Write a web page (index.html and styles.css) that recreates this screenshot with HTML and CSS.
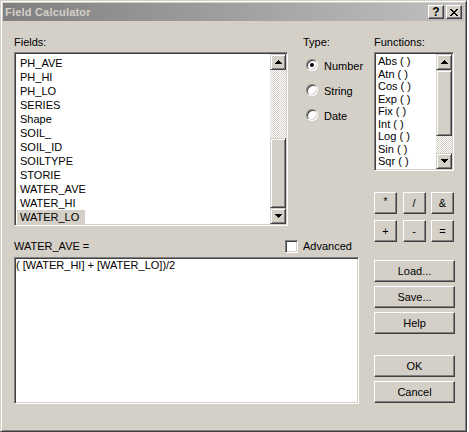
FILE: index.html
```html
<!DOCTYPE html>
<html lang="en">
<head>
    <meta charset="UTF-8">
    <title>Field Calculator</title>
    <link rel="stylesheet" href="styles.css">
</head>
<body>
    <div class="window">
        <div class="titlebar">
            <span class="title">Field Calculator</span>
            <div class="caption-buttons">
                <span class="cap-btn">?</span>
                <span class="cap-btn">
                    <svg width="8" height="7" viewBox="0 0 8 7" shape-rendering="crispEdges">
                        <path d="M0 0h2v1h-2z M6 0h2v1h-2z M1 1h2v1h-2z M5 1h2v1h-2z M2 2h4v1h-4z M3 3h2v1h-2z M2 4h4v1h-4z M1 5h2v1h-2z M5 5h2v1h-2z M0 6h2v1h-2z M6 6h2v1h-2z" fill="#000"/>
                    </svg>
                </span>
            </div>
        </div>
        <div class="client">
            <div class="left">
                <div class="top">
                    <div class="fields">
                        <div class="label">Fields:</div>
                        <div class="listbox fields-list">
                            <ul class="items">
                                <li>PH_AVE</li>
                                <li>PH_HI</li>
                                <li>PH_LO</li>
                                <li>SERIES</li>
                                <li>Shape</li>
                                <li>SOIL_</li>
                                <li>SOIL_ID</li>
                                <li>SOILTYPE</li>
                                <li>STORIE</li>
                                <li>WATER_AVE</li>
                                <li>WATER_HI</li>
                                <li class="selected">WATER_LO</li>
                            </ul>
                            <div class="scrollbar">
                                <div class="sb-btn">
                                    <svg width="7" height="4" viewBox="0 0 7 4" shape-rendering="crispEdges"><path d="M3 0h1v1h-1z M2 1h3v1h-3z M1 2h5v1h-5z M0 3h7v1h-7z" fill="#000"/></svg>
                                </div>
                                <div class="sb-track" style="height: 68px"></div>
                                <div class="sb-thumb" style="height: 70px"></div>
                                <div class="sb-btn">
                                    <svg width="7" height="4" viewBox="0 0 7 4" shape-rendering="crispEdges"><path d="M0 0h7v1h-7z M1 1h5v1h-5z M2 2h3v1h-3z M3 3h1v1h-1z" fill="#000"/></svg>
                                </div>
                            </div>
                        </div>
                    </div>
                    <div class="type">
                        <div class="label">Type:</div>
                        <div class="radio-row"><span class="radio checked"></span>Number</div>
                        <div class="radio-row"><span class="radio"></span>String</div>
                        <div class="radio-row"><span class="radio"></span>Date</div>
                    </div>
                </div>
                <div class="expr-row">
                    <span class="expr-label">WATER_AVE =</span>
                    <span class="checkbox"></span>
                    <span class="check-label">Advanced</span>
                </div>
                <div class="expression">( [WATER_HI] + [WATER_LO])/2</div>
            </div>
            <div class="right">
                <div class="label">Functions:</div>
                <div class="listbox func-list">
                    <ul class="items">
                        <li>Abs ( )</li>
                        <li>Atn ( )</li>
                        <li>Cos ( )</li>
                        <li>Exp ( )</li>
                        <li>Fix ( )</li>
                        <li>Int ( )</li>
                        <li>Log ( )</li>
                        <li>Sin ( )</li>
                        <li>Sqr ( )</li>
                    </ul>
                    <div class="scrollbar">
                        <div class="sb-btn">
                            <svg width="7" height="4" viewBox="0 0 7 4" shape-rendering="crispEdges"><path d="M3 0h1v1h-1z M2 1h3v1h-3z M1 2h5v1h-5z M0 3h7v1h-7z" fill="#000"/></svg>
                        </div>
                        <div class="sb-thumb" style="height: 66px"></div>
                        <div class="sb-track" style="height: 17px"></div>
                        <div class="sb-btn">
                            <svg width="7" height="4" viewBox="0 0 7 4" shape-rendering="crispEdges"><path d="M0 0h7v1h-7z M1 1h5v1h-5z M2 2h3v1h-3z M3 3h1v1h-1z" fill="#000"/></svg>
                        </div>
                    </div>
                </div>
                <div class="ops">
                    <button class="btn star">*</button>
                    <button class="btn">/</button>
                    <button class="btn">&amp;</button>
                    <button class="btn">+</button>
                    <button class="btn">-</button>
                    <button class="btn">=</button>
                </div>
                <div class="actions">
                    <button class="btn">Load...</button>
                    <button class="btn">Save...</button>
                    <button class="btn">Help</button>
                    <button class="btn ok">OK</button>
                    <button class="btn">Cancel</button>
                </div>
            </div>
        </div>
    </div>
</body>
</html>
```

FILE: styles.css
```css
body {
    margin: 0;
    background-color: #ffffff;
    color: #000000;
    font-family: "Liberation Sans", Arial, sans-serif;
    font-size: 11px;
}
.window {
    width: 467px;
    height: 432px;
    box-sizing: border-box;
    padding: 2px;
    display: flex;
    flex-direction: column;
    background-color: #d4d0c8;
    border: 1px solid;
    border-color: #d4d0c8 #404040 #404040 #d4d0c8;
    box-shadow: inset 1px 1px #ffffff, inset -1px -1px #808080;
}
.titlebar {
    height: 18px;
    flex-shrink: 0;
    display: flex;
    align-items: center;
    justify-content: space-between;
    padding: 0 2px;
    background: linear-gradient(to right, #808080, #c0c0c0);
}
.title {
    color: #d4d0c8;
    font-weight: bold;
    letter-spacing: 0.2px;
}
.caption-buttons {
    display: flex;
    gap: 2px;
}
.cap-btn {
    width: 16px;
    height: 14px;
    box-sizing: border-box;
    display: flex;
    align-items: center;
    justify-content: center;
    background-color: #d4d0c8;
    border: 1px solid;
    border-color: #ffffff #404040 #404040 #ffffff;
    box-shadow: inset -1px -1px #808080;
    font-weight: bold;
    font-size: 12px;
    line-height: 12px;
}
.client {
    flex: 1;
    display: flex;
    gap: 15px;
    padding: 14px 0 0 11px;
}
.label {
    height: 14px;
    line-height: 14px;
}
.left {
    width: 345px;
    flex-shrink: 0;
}
.top {
    display: flex;
}
.fields {
    width: 274px;
    flex-shrink: 0;
}
.listbox {
    margin-top: 3px;
    box-sizing: border-box;
    display: flex;
    padding: 1px;
    background-color: #ffffff;
    border: 1px solid;
    border-color: #808080 #ffffff #ffffff #808080;
    box-shadow: inset 1px 1px #404040, inset -1px -1px #d4d0c8;
}
.fields-list {
    height: 174px;
}
.items {
    flex: 1;
    margin: 0;
    padding: 2px 0 0 1px;
    list-style: none;
    overflow: hidden;
}
.items li {
    width: max-content;
    line-height: 14px;
    padding: 0 6px 0 3px;
    white-space: pre;
}
.items li.selected {
    background-color: #d4d0c8;
}
.func-list {
    width: 80px;
    height: 119px;
}
.func-list .items {
    padding: 1px 0 0 1px;
}
.func-list .items li {
    line-height: 12.5px;
    padding: 0 0 0 1px;
}
.scrollbar {
    width: 16px;
    flex-shrink: 0;
    display: flex;
    flex-direction: column;
}
.sb-btn,
.sb-thumb {
    box-sizing: border-box;
    background-color: #d4d0c8;
    border: 1px solid;
    border-color: #d4d0c8 #404040 #404040 #d4d0c8;
    box-shadow: inset 1px 1px #ffffff, inset -1px -1px #808080;
}
.sb-btn {
    height: 16px;
    display: flex;
    align-items: center;
    justify-content: center;
}
.sb-track {
    background: repeating-conic-gradient(#ffffff 0 25%, #d4d0c8 0 50%) 0 0 / 2px 2px;
}
.type {
    margin-left: 15px;
    flex-shrink: 0;
}
.radio-row {
    display: flex;
    align-items: flex-start;
    height: 14px;
    line-height: 14px;
    margin-top: 11px;
    padding-left: 3px;
}
.type .label + .radio-row {
    margin-top: 10px;
}
.radio {
    position: relative;
    width: 12px;
    height: 12px;
    box-sizing: border-box;
    margin-right: 6px;
    border-radius: 50%;
    background-color: #ffffff;
    border: 1px solid;
    border-color: #808080 #ffffff #ffffff #808080;
    box-shadow: inset 1px 1px #404040, inset -1px -1px #d4d0c8;
}
.radio.checked::after {
    content: "";
    position: absolute;
    left: 3px;
    top: 3px;
    width: 4px;
    height: 4px;
    border-radius: 50%;
    background-color: #000000;
}
.expr-row {
    display: flex;
    align-items: flex-start;
    height: 14px;
    line-height: 14px;
    margin-top: 13px;
}
.expr-label {
    width: 271px;
}
.checkbox {
    width: 13px;
    height: 13px;
    box-sizing: border-box;
    margin-top: 1px;
    background-color: #ffffff;
    border: 1px solid;
    border-color: #808080 #ffffff #ffffff #808080;
    box-shadow: inset 1px 1px #404040, inset -1px -1px #d4d0c8;
}
.check-label {
    margin-left: 5px;
}
.expression {
    margin-top: 4px;
    height: 147px;
    box-sizing: border-box;
    padding: 1px 1px;
    line-height: 12px;
    white-space: pre;
    background-color: #ffffff;
    border: 1px solid;
    border-color: #808080 #ffffff #ffffff #808080;
    box-shadow: inset 1px 1px #404040, inset -1px -1px #d4d0c8;
}
.right {
    width: 81px;
    display: flex;
    flex-direction: column;
}
.btn {
    height: 22px;
    box-sizing: border-box;
    margin: 0;
    padding: 0 0 1px;
    font-family: inherit;
    font-size: 11px;
    line-height: 14px;
    color: #000000;
    background-color: #d4d0c8;
    border: 1px solid;
    border-color: #ffffff #404040 #404040 #ffffff;
    box-shadow: inset -1px -1px #808080;
    border-radius: 0;
}
.btn.star {
    font-size: 10px;
    padding-bottom: 3px;
}
.ops {
    width: 80px;
    margin-top: 21px;
    display: grid;
    grid-template-columns: repeat(3, 23px);
    grid-auto-rows: 22px;
    justify-content: space-between;
    row-gap: 6px;
}
.actions {
    margin-top: 18px;
    display: flex;
    flex-direction: column;
    gap: 4px;
}
.actions .btn {
    width: 81px;
}
.actions .ok {
    margin-top: 17px;
}
```
